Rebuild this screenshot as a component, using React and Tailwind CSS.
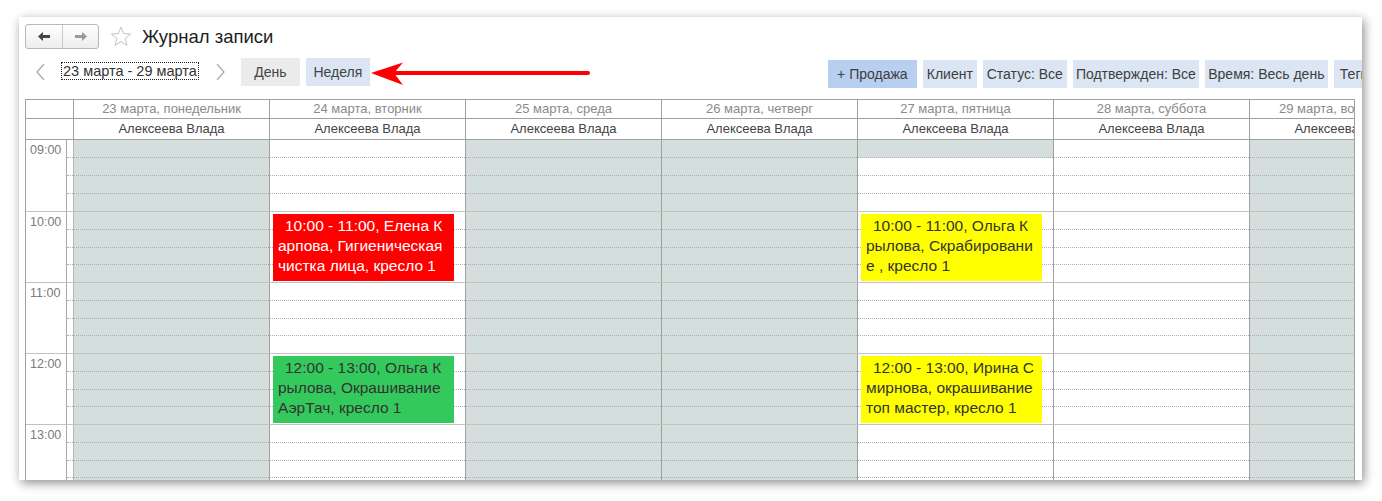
import React from 'react';

const days = [
  { date: '23 марта, понедельник', off: 'all' },
  { date: '24 марта, вторник', off: 'none' },
  { date: '25 марта, среда', off: 'all' },
  { date: '26 марта, четверг', off: 'all' },
  { date: '27 марта, пятница', off: 'first' },
  { date: '28 марта, суббота', off: 'none' },
  { date: '29 марта, воскресенье', off: 'all' },
];

const hours = ['09:00', '10:00', '11:00', '12:00', '13:00'];

const events = [
  { day: 1, hour: 1, cls: 'bg-[#ff0000] text-white', lines: ['10:00 - 11:00, Елена К', 'арпова, Гигиеническая', 'чистка лица, кресло 1'] },
  { day: 4, hour: 1, cls: 'bg-[#ffff00] text-[#333]', lines: ['10:00 - 11:00, Ольга К', 'рылова, Скрабировани', 'е , кресло 1'] },
  { day: 1, hour: 3, cls: 'bg-[#34c95c] text-[#333]', lines: ['12:00 - 13:00, Ольга К', 'рылова, Окрашивание', 'АэрТач, кресло 1'] },
  { day: 4, hour: 3, cls: 'bg-[#ffff00] text-[#333]', lines: ['12:00 - 13:00, Ирина С', 'мирнова, окрашивание', 'топ мастер, кресло 1'] },
];

const filters = [
  { label: '+ Продажа', w: 'w-[89px] justify-center', bg: 'bg-[#b8cff0]' },
  { label: 'Клиент', w: 'w-[54px] justify-center', bg: 'bg-[#dbe5f3]' },
  { label: 'Статус: Все', w: 'w-[84px] justify-center', bg: 'bg-[#dbe5f3]' },
  { label: 'Подтвержден: Все', w: 'w-[126px] justify-center', bg: 'bg-[#dbe5f3]' },
  { label: 'Время: Весь день', w: 'w-[123px] justify-center', bg: 'bg-[#dbe5f3]' },
  { label: 'Теги', w: 'w-[60px] pl-[6px]', bg: 'bg-[#dbe5f3]' },
];

const isOff = (day, hour, q) => {
  if (day.off === 'all') return true;
  if (day.off === 'first') return hour === 0 && q === 0;
  return false;
};

const Quarters = ({ off }) => (
  <div className="flex h-full flex-col">
    {[0, 1, 2, 3].map((q) => (
      <div
        key={q}
        className={`flex-1 ${q < 3 ? 'border-b border-dotted border-[#b0b0b0]' : ''} ${off(q) ? 'bg-[#d3dedd]' : ''}`}
      />
    ))}
  </div>
);

const ArrowIcon = ({ dir, color }) => (
  <svg width="12" height="9" viewBox="0 0 12 9" className={dir === 'right' ? 'rotate-180' : ''}>
    <path d="M0 4.5 L5 0 L5 3 L12 3 L12 6 L5 6 L5 9 Z" fill={color} />
  </svg>
);

const Chevron = ({ dir }) => (
  <svg width="9" height="18" viewBox="0 0 9 18">
    <path d={dir === 'left' ? 'M8 1 L1 9 L8 17' : 'M1 1 L8 9 L1 17'} fill="none" stroke="#a8a8a8" strokeWidth="1.2" />
  </svg>
);

const EventBlock = ({ ev }) => (
  <div className={`absolute left-[3px] top-[2px] w-[181px] h-[67px] pl-[5px] pt-[2px] text-[15.5px] leading-[20px] whitespace-nowrap overflow-hidden ${ev.cls}`}>
    {ev.lines.map((line, i) => (
      <div key={i} className={i === 0 ? 'pl-[7px]' : ''}>{line}</div>
    ))}
  </div>
);

export default function App() {
  return (
    <div className="min-h-screen bg-white pt-[17px] pl-[19px] font-['Liberation_Sans',Arial,sans-serif]">
      <div className="relative w-[1343px] h-[463px] overflow-hidden bg-white pt-[7px] pl-[6px] shadow-[2px_3px_10px_rgba(0,0,0,0.45)]">
        {/* title bar */}
        <div className="flex h-[25px] items-center">
          <div className="flex h-[25px] w-[74px] shrink-0 rounded-[3px] border border-[#b8b8b8] bg-gradient-to-b from-white to-[#ededed]">
            <div className="flex w-[37px] items-center justify-center border-r border-[#c8c8c8]">
              <ArrowIcon dir="left" color="#444" />
            </div>
            <div className="flex flex-1 items-center justify-center">
              <ArrowIcon dir="right" color="#9a9a9a" />
            </div>
          </div>
          <svg className="ml-[11px] shrink-0" width="22" height="21" viewBox="0 0 22 21">
            <path
              d="M11 1 L13.6 7.6 L20.6 8 L15.2 12.5 L17 19.4 L11 15.6 L5 19.4 L6.8 12.5 L1.4 8 L8.4 7.6 Z"
              fill="none"
              stroke="#c4c4c4"
              strokeWidth="1"
              strokeLinejoin="round"
            />
          </svg>
          <div className="ml-[10px] text-[18.5px] text-[#1e1e1e] whitespace-nowrap">Журнал записи</div>
        </div>

        {/* period + filters */}
        <div className="mt-[9px] flex h-[30px] items-start">
          <div className="ml-[11px] mt-[5px] shrink-0"><Chevron dir="left" /></div>
          <div className="ml-[16px] mt-[4px] shrink-0 whitespace-nowrap border border-dotted border-[#222] px-[1px] text-[14.5px] leading-[16px] text-[#333]">
            23 марта - 29 марта
          </div>
          <div className="ml-[17px] mt-[5px] shrink-0"><Chevron dir="right" /></div>
          <div className="ml-[16px] flex h-[28px] w-[59px] shrink-0 items-center justify-center bg-[#ebebeb] text-[14px] text-[#444]">День</div>
          <div className="ml-[6px] flex h-[28px] w-[64px] shrink-0 items-center justify-center bg-[#dbe5f3] text-[14px] text-[#444]">Неделя</div>
          <div className="ml-[458px] mt-[2px] flex shrink-0 gap-[6px]">
            {filters.map((f) => (
              <div key={f.label} className={`flex h-[28px] shrink-0 items-center whitespace-nowrap text-[14px] text-[#3e3e3e] ${f.w} ${f.bg}`}>
                {f.label}
              </div>
            ))}
          </div>
        </div>

        {/* week grid */}
        <div className="mt-[11px] w-[1330px] overflow-hidden border-l border-t border-r border-[#a0a0a0]">
          <div className="w-max">
            <div className="flex h-[19px] border-b border-[#a0a0a0]">
              <div className="w-[48px] shrink-0 border-r border-[#a0a0a0]" />
              {days.map((d) => (
                <div key={d.date} className="w-[196px] shrink-0 border-r border-[#a0a0a0] text-center text-[13px] leading-[18px] text-[#8a8a8a] whitespace-nowrap">
                  {d.date}
                </div>
              ))}
            </div>
            <div className="flex h-[21px] border-b border-[#a0a0a0]">
              <div className="w-[48px] shrink-0 border-r border-[#a0a0a0]" />
              {days.map((d) => (
                <div key={d.date} className="w-[196px] shrink-0 border-r border-[#a0a0a0] text-center text-[13px] leading-[20px] text-[#444]">
                  Алексеева Влада
                </div>
              ))}
            </div>

            {hours.map((label, h) => (
              <div key={label} className={`flex border-b border-[#c2c2c2] ${h === 0 ? 'h-[72px]' : 'h-[71px]'}`}>
                <div className="w-[41px] shrink-0 border-r border-[#a8a8a8] pl-[4px] pt-[2px] text-[12.5px] leading-[16px] text-[#7a7a7a]">
                  {label}
                </div>
                <div className="w-[7px] shrink-0 border-r border-[#b8b8b8]">
                  <Quarters off={() => false} />
                </div>
                {days.map((d, di) => {
                  const ev = events.find((e) => e.day === di && e.hour === h);
                  return (
                    <div key={d.date} className="relative w-[196px] shrink-0 border-r border-[#a0a0a0]">
                      <Quarters off={(q) => isOff(d, h, q)} />
                      {ev && <EventBlock ev={ev} />}
                    </div>
                  );
                })}
              </div>
            ))}
          </div>
        </div>

        {/* pointer to the week switch */}
        <svg className="absolute left-[351px] top-[43px]" width="240" height="30" viewBox="0 0 240 30">
          <line x1="22" y1="13" x2="218" y2="13" stroke="#f00" strokeWidth="4" strokeLinecap="round" />
          <path d="M1 13 L33 2.5 L24 13 L33 25 Z" fill="#f00" />
        </svg>
      </div>
    </div>
  );
}
